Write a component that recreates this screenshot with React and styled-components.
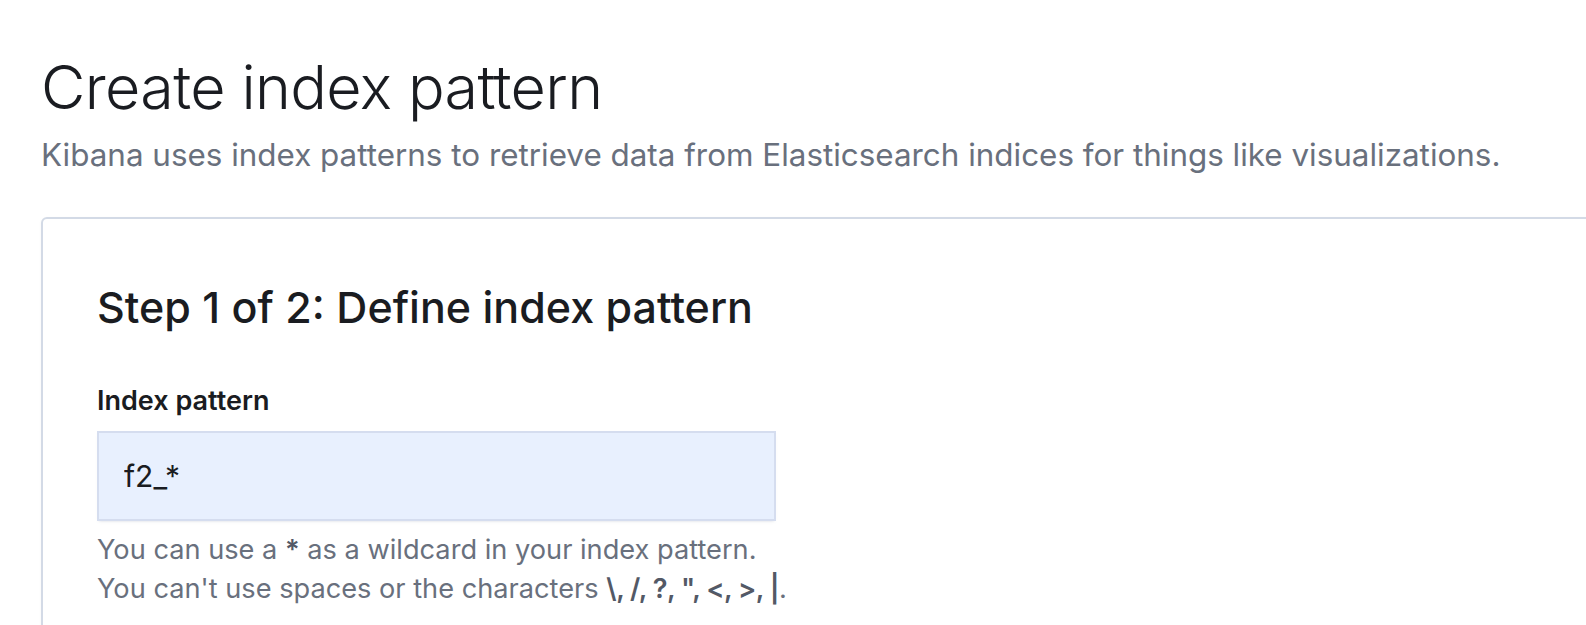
import styled, { createGlobalStyle } from "styled-components";

const GlobalStyle = createGlobalStyle`
  html, body {
    margin: 0;
    padding: 0;
    background: #fff;
    overflow: hidden;
  }
  body {
    font-family: Inter, "Noto Sans", sans-serif;
    color: #1a1c21;
  }
`;

const Page = styled.div`
  width: 1640px;
  padding: 49px 0 0 41px;
`;

const PageTitle = styled.h1`
  margin: 0;
  font-size: 61px;
  font-weight: 300;
  line-height: 76px;
  letter-spacing: -0.65px;
  color: #1a1c21;
`;

const Subtitle = styled.p`
  margin: 7px 0 0;
  font-size: 31.4px;
  line-height: 46px;
  color: #69707d;
`;

const Panel = styled.section`
  margin-top: 39px;
  border: 2px solid #d3dae6;
  border-radius: 6px;
  background: #fff;
  padding: 62px 54px 60px;
  box-shadow: 0 1px 3px rgba(0, 0, 0, 0.04);
`;

const StepTitle = styled.h2`
  margin: 0;
  font-size: 43px;
  font-weight: 500;
  line-height: 52px;
  color: #1a1c21;
`;

const Field = styled.div`
  margin-top: 50px;
  width: 679px;
`;

const Label = styled.label`
  display: block;
  font-size: 27px;
  font-weight: 600;
  line-height: 35px;
  color: #1a1c21;
`;

const Input = styled.input`
  box-sizing: border-box;
  display: block;
  width: 100%;
  height: 90px;
  margin-top: 13px;
  padding: 0 25px;
  border: 2px solid #d5ddef;
  background: #e8f0fe;
  font-family: Inter, "Noto Sans", sans-serif;
  font-size: 30px;
  color: #1a1c21;
  outline: none;
  box-shadow: 0 2px 3px -2px rgba(152, 162, 179, 0.4);
`;

const Help = styled.div`
  margin-top: 10px;
  font-size: 27.2px;
  line-height: 38.5px;
  color: #69707d;
  white-space: nowrap;
`;

const Strong = styled.strong`
  font-weight: 600;
  color: #535966;
  letter-spacing: ${(props) => (props.tight ? "-0.5px" : "0")};
`;

export default function App() {
  return (
    <>
      <GlobalStyle />
      <Page>
        <PageTitle>Create index pattern</PageTitle>
        <Subtitle>
          Kibana uses index patterns to retrieve data from Elasticsearch
          indices for things like visualizations.
        </Subtitle>
        <Panel>
          <StepTitle>Step 1 of 2: Define index pattern</StepTitle>
          <Field>
            <Label htmlFor="index-pattern">Index pattern</Label>
            <Input id="index-pattern" defaultValue="f2_*" />
            <Help>
              <div>
                You can use a <Strong>*</Strong> as a wildcard in your index
                pattern.
              </div>
              <div>
                You can't use spaces or the characters{" "}
                <Strong tight>\, /, ?, ", &lt;, &gt;, |</Strong>.
              </div>
            </Help>
          </Field>
        </Panel>
      </Page>
    </>
  );
}
